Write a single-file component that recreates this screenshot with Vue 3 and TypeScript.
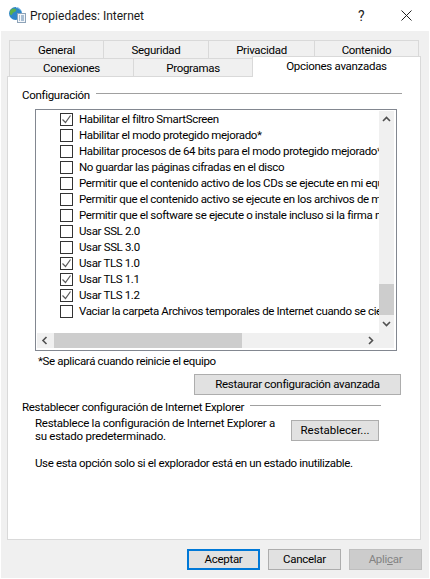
<script setup lang="ts">
interface Option { label: string; checked: boolean }
const options: Option[] = [
  { label: 'Habilitar el filtro SmartScreen', checked: true },
  { label: 'Habilitar el modo protegido mejorado*', checked: false },
  { label: 'Habilitar procesos de 64 bits para el modo protegido mejorado*', checked: false },
  { label: 'No guardar las páginas cifradas en el disco', checked: false },
  { label: 'Permitir que el contenido activo de los CDs se ejecute en mi equipo*', checked: false },
  { label: 'Permitir que el contenido activo se ejecute en los archivos de mi equipo*', checked: false },
  { label: 'Permitir que el software se ejecute o instale incluso si la firma no es válida', checked: false },
  { label: 'Usar SSL 2.0', checked: false },
  { label: 'Usar SSL 3.0', checked: false },
  { label: 'Usar TLS 1.0', checked: true },
  { label: 'Usar TLS 1.1', checked: true },
  { label: 'Usar TLS 1.2', checked: true },
  { label: 'Vaciar la carpeta Archivos temporales de Internet cuando se cierre el explorador', checked: false },
]
const topTabs = [
  { label: 'General', width: 94 },
  { label: 'Seguridad', width: 105 },
  { label: 'Privacidad', width: 106 },
  { label: 'Contenido', width: 105 },
]
const lowerTabs = [
  { label: 'Conexiones', width: 124 },
  { label: 'Programas', width: 119 },
]
</script>

<template>
  <div class="window">
    <header class="titlebar">
      <svg class="app-icon" width="18" height="18" viewBox="0 0 18 18">
        <circle cx="7.5" cy="7.5" r="6.5" fill="#2f86c9" />
        <path d="M3 3.5c2-1.5 4-1 5 0s-1 2.5-2.500 3-1 3-2.500 2.500S1.500 5 3 3.500z" fill="#5cb04a" />
        <path d="M9 11c1-1 3-1 3.500 0s-1 2-2 2-2-1-1.500-2z" fill="#5cb04a" />
        <path d="M8 1.500c2 0 4 1 5 3" stroke="#a9d6f2" fill="none" />
        <rect x="9.500" y="7.500" width="8" height="9" fill="#f4f7fa" stroke="#8ea3b8" />
        <path d="M11 10h1M13 10h3M11 12h1M13 12h3M11 14h1M13 14h3" stroke="#5d86ad" />
      </svg>
      <span class="title">Propiedades: Internet</span>
      <span class="help">?</span>
      <svg class="close" width="11" height="11" viewBox="0 0 11 11">
        <path d="M.5.500l10 10M10.500.500l-10 10" stroke="#222" fill="none" />
      </svg>
    </header>

    <div class="client">
      <nav class="tabs">
        <div class="tab-row first">
          <span v-for="t in topTabs" :key="t.label" class="tab" :style="{ width: t.width + 'px' }">{{ t.label }}</span>
        </div>
        <div class="tab-row second">
          <span v-for="t in lowerTabs" :key="t.label" class="tab" :style="{ width: t.width + 'px' }">{{ t.label }}</span>
          <span class="tab active">Opciones avanzadas</span>
        </div>
      </nav>

      <section class="panel">
        <div class="group-head config">
          <span>Configuración</span>
          <i class="rule"></i>
        </div>

        <div class="listbox">
          <div class="list-view">
            <label v-for="o in options" :key="o.label" class="row">
              <span class="check">
                <svg v-if="o.checked" width="11" height="11" viewBox="0 0 11 11">
                  <path d="M1.500 5.500l3 3 5-7" stroke="#5a5a5a" stroke-width="1.200" fill="none" />
                </svg>
              </span>
              <span class="row-text">{{ o.label }}</span>
            </label>
          </div>
          <div class="vbar">
            <svg class="arrow-v" width="15" height="17" viewBox="0 0 15 17">
              <path d="M4 10l3.500-3.500L11 10" stroke="#505050" stroke-width="1.600" fill="none" />
            </svg>
            <i class="vspace"></i>
            <i class="vthumb"></i>
            <svg class="arrow-v" width="15" height="18" viewBox="0 0 15 18">
              <path d="M4 7l3.500 3.500L11 7" stroke="#505050" stroke-width="1.600" fill="none" />
            </svg>
          </div>
          <div class="hbar">
            <svg width="17" height="15" viewBox="0 0 17 15">
              <path d="M9.500 4L6 7.500 9.500 11" stroke="#505050" stroke-width="1.600" fill="none" />
            </svg>
            <i class="hthumb"></i>
            <i class="hspace"></i>
            <svg width="17" height="15" viewBox="0 0 17 15">
              <path d="M7 4l3.500 3.500L7 11" stroke="#505050" stroke-width="1.600" fill="none" />
            </svg>
          </div>
          <i class="corner"></i>
        </div>

        <p class="restart-note">*Se aplicará cuando reinicie el equipo</p>

        <div class="restore-line">
          <button class="btn restore">Restaurar configuración avanzada</button>
        </div>

        <div class="group-head reset">
          <span>Restablecer configuración de Internet Explorer</span>
          <i class="rule"></i>
        </div>

        <div class="reset-body">
          <p>Restablece la configuración de Internet Explorer a<br />su estado predeterminado.</p>
          <button class="btn reset-btn">Restablecer...</button>
        </div>
        <p class="warning">Use esta opción solo si el explorador está en un estado inutilizable.</p>
      </section>

      <footer class="actions">
        <button class="btn action primary">Aceptar</button>
        <button class="btn action">Cancelar</button>
        <button class="btn action disabled">Apli<u>c</u>ar</button>
      </footer>
    </div>
  </div>
</template>

<style>
html, body { margin: 0; background: #fff; }
</style>

<style scoped>
.window {
  width: 430px;
  height: 579px;
  display: flex;
  flex-direction: column;
  background: #fff;
  font-family: Roboto, sans-serif;
  font-size: 11.5px;
  letter-spacing: -0.3px;
  color: #000;
  overflow: hidden;
}
p { margin: 0; }
i { display: block; }
.titlebar {
  height: 31px;
  flex: none;
  display: flex;
  align-items: center;
  padding-left: 8px;
}
.app-icon { flex: none; margin-top: -1px; }
.title { margin-left: 4px; font-size: 12px; color: #1a1a1a; letter-spacing: 0; }
.help { margin-left: 214px; font-size: 14px; color: #222; letter-spacing: 0; }
.close { margin-left: 36px; }
.client {
  flex: 1;
  margin: 0 1px 1px;
  background: #f0f0f0;
  padding: 9px 0 0 6px;
  display: flex;
  flex-direction: column;
  min-height: 0;
}
.tabs { height: 36px; flex: none; }
.tab-row { display: flex; height: 18px; margin-left: 2px; }
.tab {
  box-sizing: border-box;
  border: 1px solid #d9d9d9;
  border-bottom: 0;
  border-right-width: 0;
  background: #f0f0f0;
  display: flex;
  align-items: center;
  justify-content: center;
  line-height: 1;
  padding-top: 3px;
}
.first .tab:last-child { border-right-width: 1px; }
.active {
  position: relative;
  z-index: 1;
  width: 169px;
  height: 21px;
  margin-top: -2px;
  border-right-width: 1px;
  background: #fff;
  padding-top: 0;
  padding-bottom: 1px;
}
.panel {
  box-sizing: border-box;
  width: 414px;
  height: 464px;
  flex: none;
  background: #fff;
  border: 1px solid #d9d9d9;
  padding: 0 0 0 14px;
  position: relative;
}
.group-head { display: flex; align-items: center; line-height: 16px; }
.config { margin-top: 10px; width: 380px; }
.reset { margin-top: 4px; width: 359px; }
.rule { flex: 1; height: 1px; background: #a0a0a0; margin-left: 6px; margin-top: -3px; }
.listbox {
  box-sizing: border-box;
  width: 362px;
  height: 242px;
  margin: 6px 0 0 13px;
  border: 1px solid #828790;
  padding: 1px 2px 2px 1px;
  display: grid;
  grid-template-columns: 342px 15px;
  grid-template-rows: 222px 15px;
  background: #fff;
}
.list-view { overflow: hidden; min-width: 0; }
.row { display: flex; align-items: center; height: 16px; padding-left: 23px; white-space: nowrap; letter-spacing: -0.35px; }
.check {
  box-sizing: border-box;
  width: 13px;
  height: 13px;
  flex: none;
  border: 1px solid #333;
  background: #fff;
  display: flex;
  align-items: center;
  justify-content: center;
}
.row-text { margin-left: 6px; }
.vbar, .hbar { background: #f0f0f0; display: flex; }
.vbar { flex-direction: column; }
.vspace { flex: 1; }
.vthumb { height: 31px; background: #cdcdcd; }
.arrow-v { flex: none; }
.hthumb { width: 188px; background: #cdcdcd; }
.hspace { flex: 1; }
.hbar svg { flex: none; }
.corner { background: #f0f0f0; }
.restart-note { margin: 2px 0 0 16px; line-height: 16px; letter-spacing: -0.35px; }
.btn {
  box-sizing: border-box;
  font: inherit;
  letter-spacing: inherit;
  color: #000;
  background: #e1e1e1;
  border: 1px solid #adadad;
  padding: 0;
  line-height: 1;
}
.restore-line { display: flex; justify-content: flex-end; width: 379px; margin-top: 5px; }
.restore { width: 207px; height: 21px; }
.reset-body {
  display: flex;
  justify-content: space-between;
  align-items: flex-start;
  width: 344px;
  margin: 5px 0 0 13px;
}
.reset-body p { line-height: 13px; margin-top: -3px; letter-spacing: -0.26px; }
.reset-btn { width: 88px; height: 21px; letter-spacing: 0; }
.warning { margin: 12px 0 0 13px; line-height: 16px; letter-spacing: -0.35px; }
.actions { display: flex; justify-content: flex-end; gap: 8px; width: 415px; margin-top: 9px; }
.action { width: 73px; height: 21px; }
.primary { border: 2px solid #0078d7; }
.disabled { background: #ccc; border-color: #bfbfbf; color: #838383; }
</style>
